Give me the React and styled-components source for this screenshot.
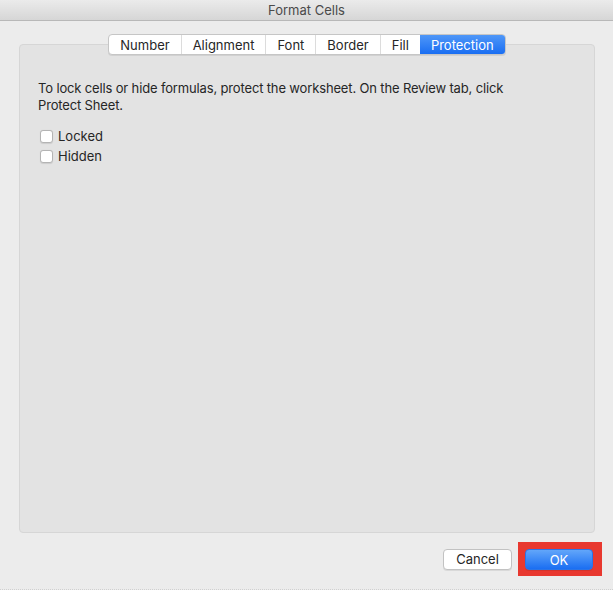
import React from "react";
import styled, { createGlobalStyle } from "styled-components";

const GlobalStyle = createGlobalStyle`
	html, body {
		margin: 0;
		padding: 0;
	}
	body {
		font-family: Inter, "Liberation Sans", Arial, sans-serif;
		font-size: 13px;
		color: #262626;
		background: #ececec;
	}
`;

const WindowStyled = styled.div`
	width: 613px;
	height: 590px;
	display: flex;
	flex-direction: column;
	background: #ececec;
	box-sizing: border-box;
	border-bottom: 1px dotted #d0d0d0;
`;

const TitleBar = styled.div`
	height: 21px;
	flex-shrink: 0;
	display: flex;
	align-items: center;
	justify-content: center;
	background: linear-gradient(#ebebeb, #d6d6d6);
	border-bottom: 1px solid #b8b8b8;
	box-sizing: border-box;
	color: #4a4a4a;
	font-size: 13px;
`;

const Body = styled.div`
	flex: 1;
	display: flex;
	flex-direction: column;
	padding: 13px 18px 0 19px;
`;

const TabRow = styled.div`
	display: flex;
	justify-content: center;
	position: relative;
	z-index: 1;
`;

const TabGroup = styled.div`
	display: flex;
	height: 19px;
	background: #fff;
	border: 1px solid #c6c6c6;
	border-radius: 4px;
	box-shadow: 0 1px 0 rgba(0, 0, 0, 0.08);
	overflow: hidden;
`;

const Tab = styled.div`
	display: flex;
	align-items: center;
	padding: 0 11px;
	font-size: 13px;
	color: ${(p) => (p.$active ? "#fff" : "#262626")};
	background: ${(p) => (p.$active ? "linear-gradient(#4f97f8, #1a6ef2)" : "transparent")};
	border-left: ${(p) => (p.$first || p.$active ? "none" : "1px solid #dcdcdc")};
`;

const Panel = styled.div`
	margin-top: -11px;
	height: 489px;
	box-sizing: border-box;
	background: #e3e3e3;
	border: 1px solid #d6d6d6;
	border-radius: 4px;
	padding: 35px 18px 0 18px;
`;

const Description = styled.p`
	margin: 0 0 13px;
	line-height: 16.5px;
	letter-spacing: -0.15px;
	width: 480px;
`;

const CheckRow = styled.label`
	display: flex;
	align-items: center;
	gap: 5px;
	height: 20px;
	padding-left: 2px;
`;

const CheckBox = styled.span`
	width: 13px;
	height: 13px;
	box-sizing: border-box;
	background: #fff;
	border: 1px solid #b4b4b4;
	border-radius: 3px;
	box-shadow: 0 0.5px 1px rgba(0, 0, 0, 0.1);
`;

const Footer = styled.div`
	display: flex;
	justify-content: flex-end;
	align-items: center;
	gap: 6px;
	margin-right: -7px;
	padding-top: 9px;
`;

const Highlight = styled.div`
	display: flex;
	padding: 7px 9px 6px 7px;
	background: #e8382f;
`;

const Button = styled.button`
	height: 21px;
	width: ${(p) => p.$width}px;
	font-family: inherit;
	font-size: 13px;
	border-radius: 4px;
	padding: 0;
	box-sizing: border-box;
	color: ${(p) => (p.$primary ? "#fff" : "#262626")};
	background: ${(p) => (p.$primary ? "linear-gradient(#62a6fa, #1a6ef2)" : "#fff")};
	border: 1px solid ${(p) => (p.$primary ? "#2a74e8" : "#c2c2c2")};
	box-shadow: 0 1px 0 rgba(0, 0, 0, 0.08);
`;

const tabs = ["Number", "Alignment", "Font", "Border", "Fill", "Protection"];

function App() {
	return (
		<>
			<GlobalStyle />
			<WindowStyled>
				<TitleBar>Format Cells</TitleBar>
				<Body>
					<TabRow>
						<TabGroup>
							{tabs.map((t, i) => (
								<Tab key={t} $first={i === 0} $active={t === "Protection"}>
									{t}
								</Tab>
							))}
						</TabGroup>
					</TabRow>
					<Panel>
						<Description>
							To lock cells or hide formulas, protect the worksheet. On the Review tab, click
							Protect Sheet.
						</Description>
						<CheckRow>
							<CheckBox />
							Locked
						</CheckRow>
						<CheckRow>
							<CheckBox />
							Hidden
						</CheckRow>
					</Panel>
					<Footer>
						<Button $width={69}>Cancel</Button>
						<Highlight>
							<Button $width={68} $primary>
								OK
							</Button>
						</Highlight>
					</Footer>
				</Body>
			</WindowStyled>
		</>
	);
}

export default App;
